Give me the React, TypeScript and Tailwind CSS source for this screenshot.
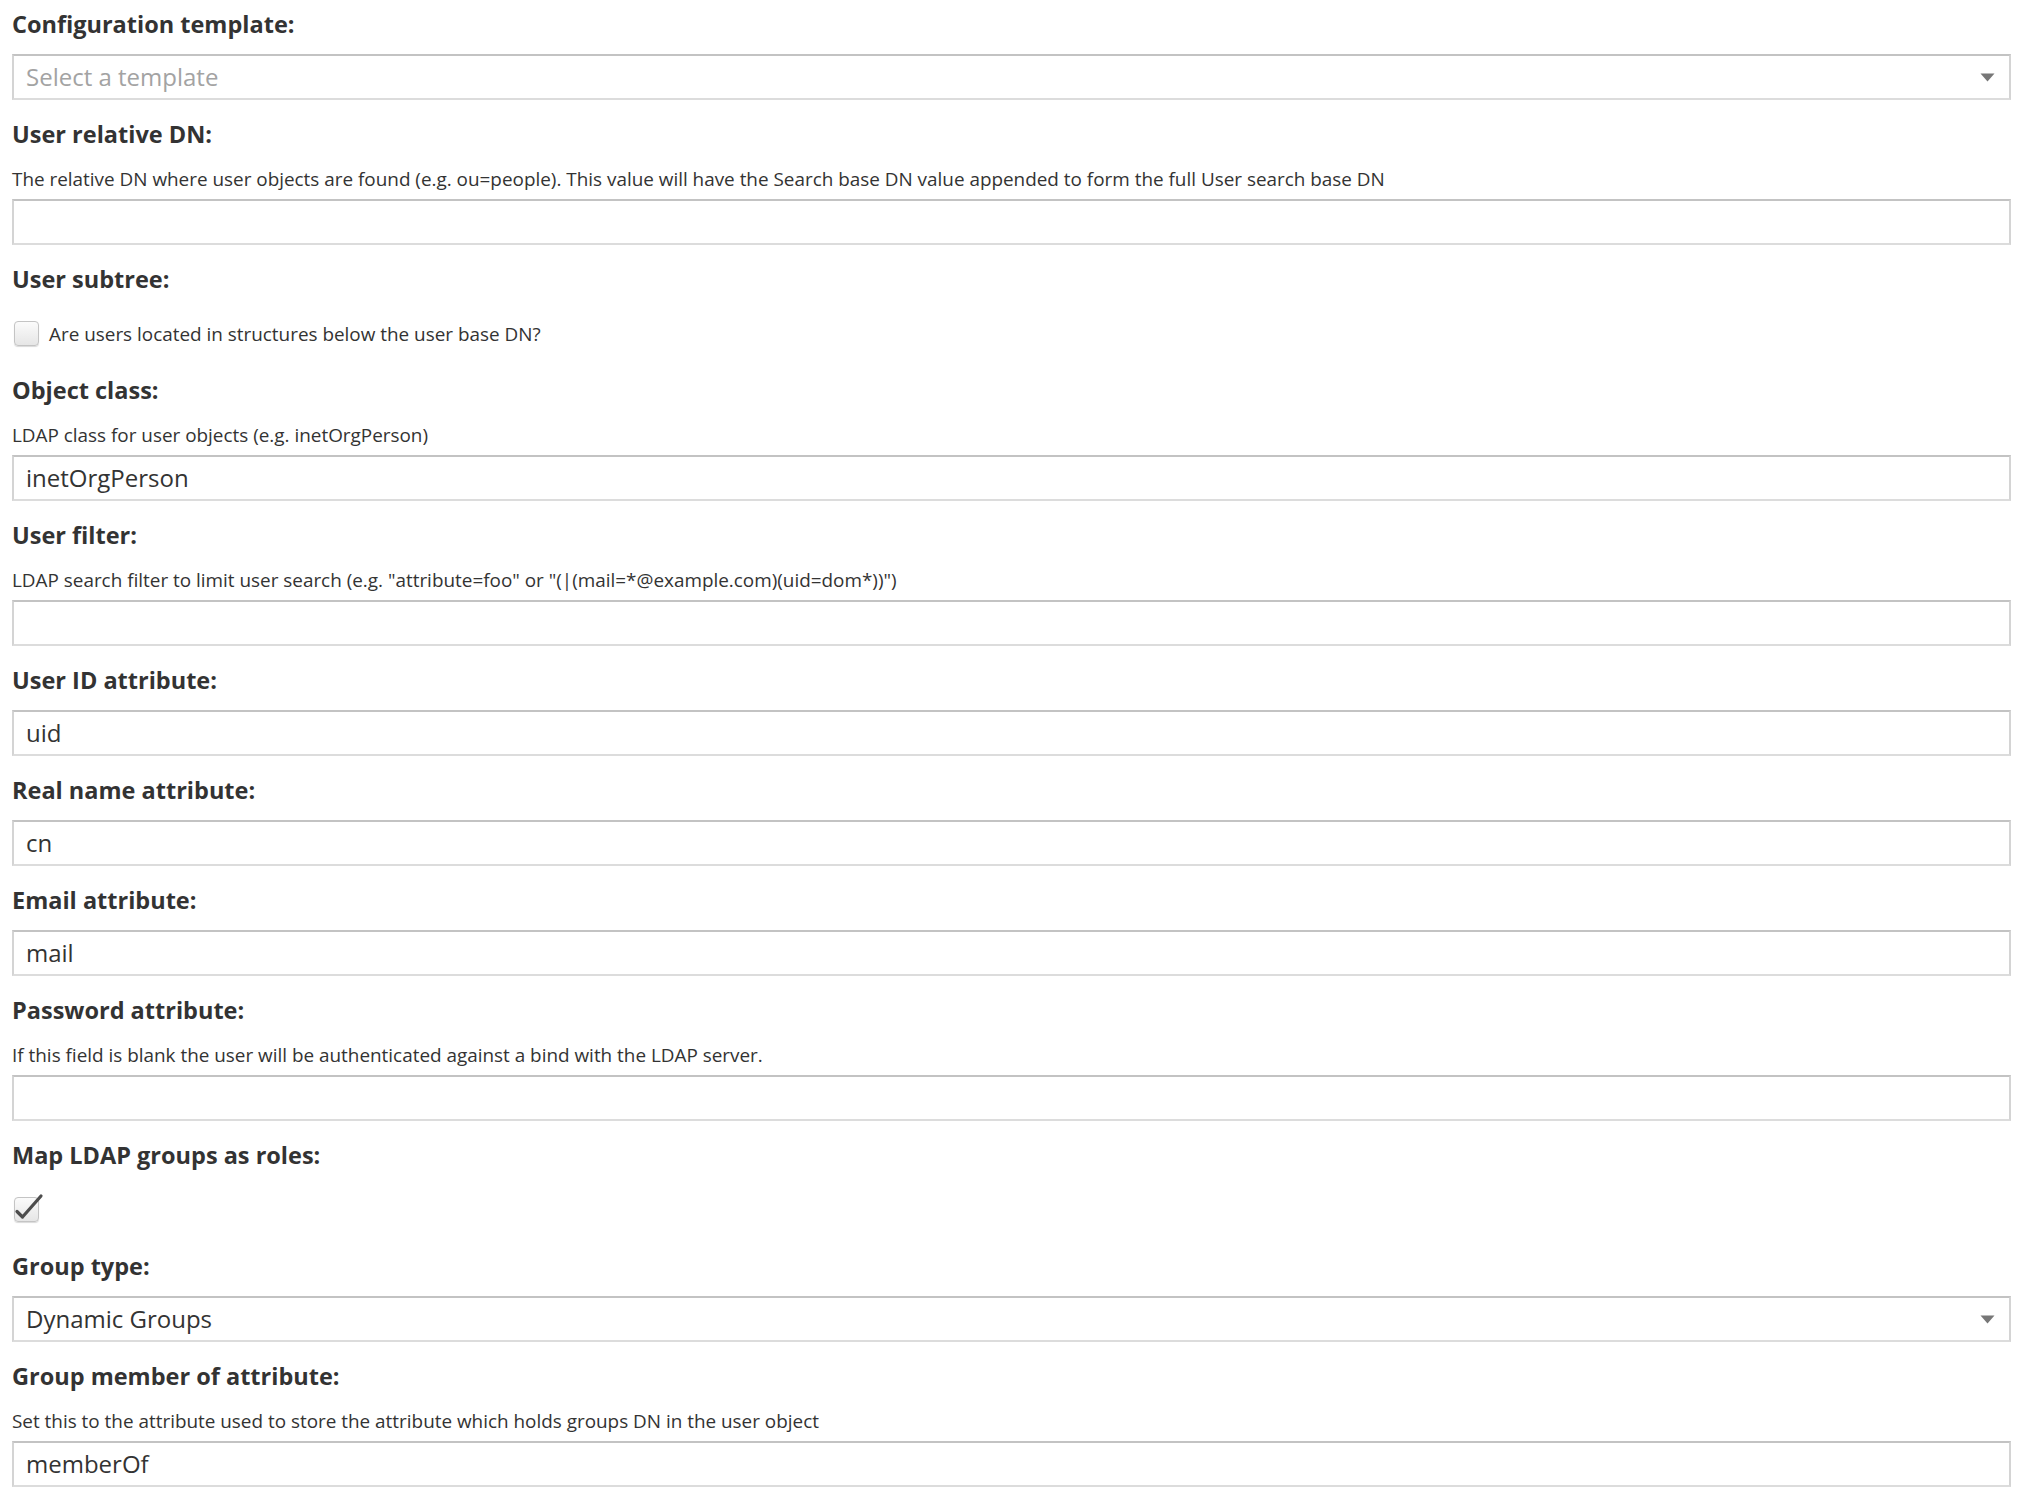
import React from "react";

const font = "font-['Open_Sans','Liberation_Sans',sans-serif]";

function Label({ children }: { children: React.ReactNode }) {
  return (
    <div className="text-[23.5px] font-bold leading-[30px] text-[#333333]">{children}</div>
  );
}

function Desc({ children }: { children: React.ReactNode }) {
  return (
    <div className="mt-[18px] text-[18.9px] leading-[24px] text-[#333333]">{children}</div>
  );
}

function Box({ value, placeholder, select, mt }: { value?: string; placeholder?: string; select?: boolean; mt: string }) {
  return (
    <div
      className={`${mt} flex h-[46px] w-full items-center justify-between border-2 border-[#d4d4d4] border-t-[#c3c3c3] border-b-[#dcdcdc] bg-white pl-[12px] pr-[14px]`}
    >
      <span className={`text-[24px] leading-none ${value ? "text-[#333333]" : "text-[#a3a3a3]"}`}>
        {value ?? placeholder ?? ""}
      </span>
      {select && (
        <svg width="15" height="9" viewBox="0 0 15 9" className="shrink-0">
          <path d="M0.5 0.5 L14.5 0.5 L7.5 8.5 Z" fill="#777777" />
        </svg>
      )}
    </div>
  );
}

function Field({
  label,
  desc,
  value,
  placeholder,
  select,
}: {
  label: string;
  desc?: string;
  value?: string;
  placeholder?: string;
  select?: boolean;
}) {
  return (
    <div className="mb-[19px]">
      <Label>{label}</Label>
      {desc && <Desc>{desc}</Desc>}
      <Box value={value} placeholder={placeholder} select={select} mt={desc ? "mt-[8px]" : "mt-[15px]"} />
    </div>
  );
}

function Checkbox({ checked }: { checked?: boolean }) {
  return (
    <div className="relative ml-[2px] h-[25px] w-[25px] shrink-0 rounded-[4px] border border-[#c4c4c4] bg-gradient-to-b from-[#fbfbfb] to-[#e6e6e6] shadow-[0_1px_1px_rgba(0,0,0,0.15)]">
      {checked && (
        <svg
          className="absolute -left-px -top-px overflow-visible"
          width="25"
          height="25"
          viewBox="0 0 25 25"
        >
          <path
            d="M3 14.5 L8.5 20 L27 -1"
            fill="none"
            stroke="#4d4d4d"
            strokeWidth="3.2"
            strokeLinecap="round"
            strokeLinejoin="round"
          />
        </svg>
      )}
    </div>
  );
}

function CheckField({ label, text, checked }: { label: string; text?: string; checked?: boolean }) {
  return (
    <div className="mb-[29px]">
      <Label>{label}</Label>
      <div className="mt-[27px] flex h-[25px] items-center gap-[10px]">
        <Checkbox checked={checked} />
        {text && <span className="text-[18.9px] leading-[24px] text-[#333333]">{text}</span>}
      </div>
    </div>
  );
}

export default function App() {
  return (
    <div className={`${font} min-h-[1500px] bg-white px-[12px] pt-[9px] text-[#333333]`}>
      <div className="w-[1999px]">
        <Field label="Configuration template:" placeholder="Select a template" select />
        <Field
          label="User relative DN:"
          desc="The relative DN where user objects are found (e.g. ou=people). This value will have the Search base DN value appended to form the full User search base DN"
        />
        <CheckField label="User subtree:" text="Are users located in structures below the user base DN?" />
        <Field label="Object class:" desc="LDAP class for user objects (e.g. inetOrgPerson)" value="inetOrgPerson" />
        <Field
          label="User filter:"
          desc={'LDAP search filter to limit user search (e.g. "attribute=foo" or "(|(mail=*@example.com)(uid=dom*))")'}
        />
        <Field label="User ID attribute:" value="uid" />
        <Field label="Real name attribute:" value="cn" />
        <Field label="Email attribute:" value="mail" />
        <Field
          label="Password attribute:"
          desc="If this field is blank the user will be authenticated against a bind with the LDAP server."
        />
        <CheckField label="Map LDAP groups as roles:" checked />
        <Field label="Group type:" value="Dynamic Groups" select />
        <Field
          label="Group member of attribute:"
          desc="Set this to the attribute used to store the attribute which holds groups DN in the user object"
          value="memberOf"
        />
      </div>
    </div>
  );
}
